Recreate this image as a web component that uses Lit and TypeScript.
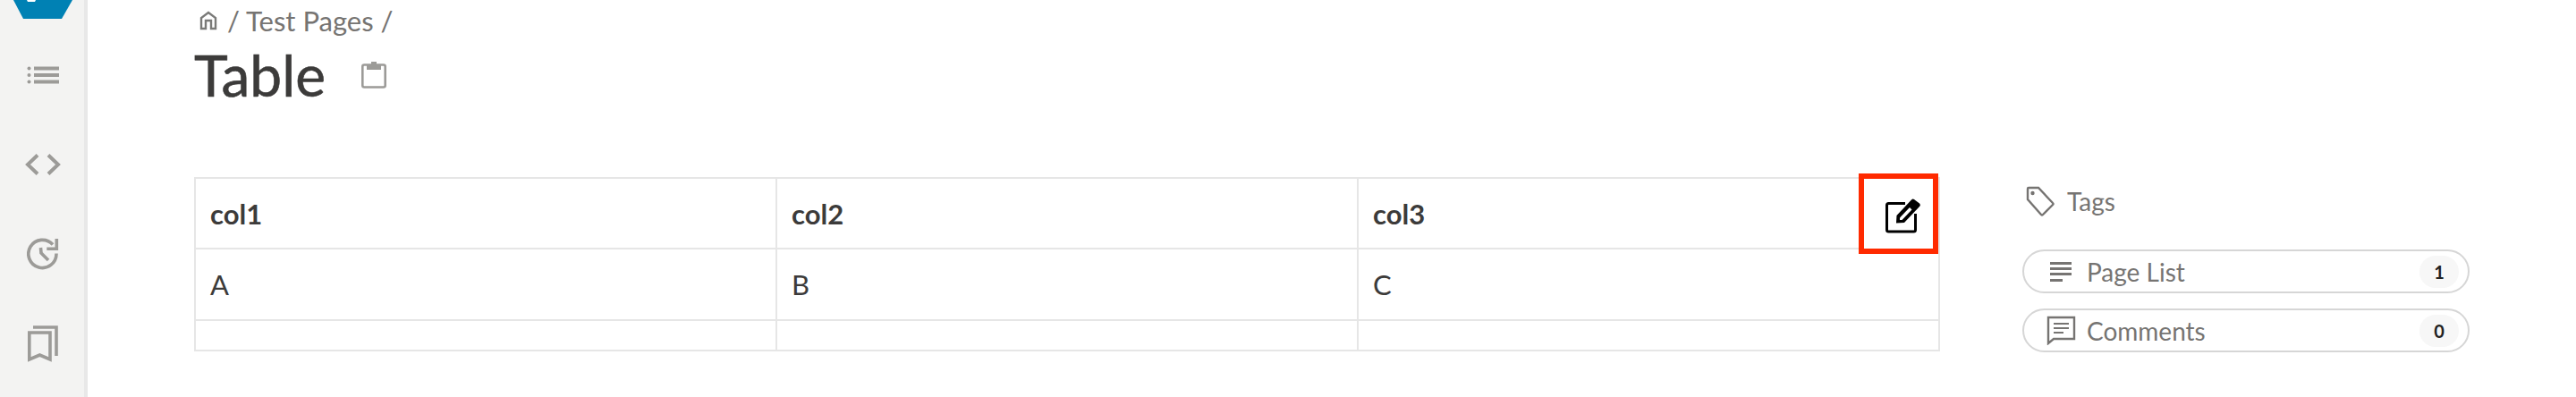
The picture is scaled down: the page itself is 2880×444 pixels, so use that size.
import { LitElement, html, css } from "lit";
import { customElement } from "lit/decorators.js";

@customElement("app-root")
export class AppRoot extends LitElement {
  static styles = css`
    :host { display: flex; width: 2880px; height: 444px; overflow: hidden; background: #fff; font-family: Lato, "Liberation Sans", sans-serif; color: #3c3b3a; }
    .side { width: 94px; flex: none; background: #f3f3f2; border-right: 4px solid #e8e8e8; display: flex; flex-direction: column; align-items: center; }
    .logo { display: block; height: 21px; width: 66px; margin: 0 0 13px 2px; flex: none; }
    .nav { height: 100px; flex: none; display: flex; align-items: center; justify-content: center; margin-left: 2px; }
    .nav svg { display: block; }
    .main { width: 1952px; margin-left: 119px; flex: none; }
    .crumb { height: 46px; display: flex; align-items: center; gap: 11px; font-size: 31px; color: #767472; white-space: nowrap; }
    .crumb svg { margin-left: 6px; }
    .title { display: flex; align-items: center; height: 70px; margin-top: 3px; font-size: 64px; line-height: 70px; color: #3c3b3a; -webkit-text-stroke: 0.6px #3c3b3a; }
    .title svg { margin-left: 40px; }
    .tablewrap { position: relative; margin-top: 79px; }
    table { border-collapse: collapse; width: 100%; table-layout: fixed; font-size: 31px; }
    td, th { border: 2px solid #e6e6e6; padding: 0 16px; text-align: left; height: 78px; }
    th { font-weight: 700; height: 77px; }
    tr.empty td { height: 32px; }
    .edit { position: absolute; right: 2px; top: -4px; width: 89px; height: 90px; box-sizing: border-box; border: 6px solid #ff2a00; padding: 4px 0 0 10px; display: flex; align-items: center; justify-content: center; background: #fff; }
    .aside { margin-left: 92px; width: 500px; flex: none; padding-top: 208px; }
    .tags { display: flex; align-items: center; gap: 14px; height: 34px; font-size: 28px; color: #767472; padding-left: 4px; margin-bottom: 37px; }
    .pill { height: 49px; box-sizing: border-box; border: 2px solid #d6d6d6; border-radius: 25px; display: flex; align-items: center; font-size: 28px; color: #767472; margin-bottom: 17px; padding-right: 10px; background: #fff; }
    .pill .ico { width: 58px; margin-left: 12px; display: flex; justify-content: center; flex: none; }
    .pill .lbl { flex: 1; }
    .count { width: 44px; height: 36px; border-radius: 18px; background: #f7f7f7; color: #222; font-size: 20px; font-weight: 700; display: flex; align-items: center; justify-content: center; }
  `;

  render() {
    const g = "#9c9b98";
    return html`
      <nav class="side">
        <svg class="logo" viewBox="0 0 66 21"><path d="M0 0 H66 L54 21 H11 Z" fill="#0081b4"/><path d="M15 0 H25 L24 2 H16 Z" fill="#fff"/></svg>
        <div class="nav"><svg width="36" height="20" viewBox="0 0 36 20" fill="${g}"><circle cx="2.5" cy="2.5" r="2"/><circle cx="2.5" cy="10" r="2"/><circle cx="2.5" cy="17.5" r="2"/><rect x="8" y="0.5" width="28" height="4"/><rect x="8" y="8" width="28" height="4"/><rect x="8" y="15.5" width="28" height="4"/></svg></div>
        <div class="nav"><svg width="40" height="24" viewBox="0 0 40 24" fill="none" stroke="${g}" stroke-width="4"><path d="M14 1.5 L3 12 L14 22.5"/><path d="M26 1.5 L37 12 L26 22.5"/></svg></div>
        <div class="nav"><svg width="36" height="36" viewBox="0 0 36 36" fill="none" stroke="${g}" stroke-width="3.6"><path d="M33 17.5 A15.6 15.6 0 1 1 29 7.5"/><path d="M15.5 11 L16 17 L24 25"/><path d="M33.3 1 V12.3 H22.3"/></svg></div>
        <div class="nav"><svg width="36" height="42" viewBox="0 0 36 42" fill="none" stroke="${g}" stroke-width="3.6"><path d="M2.8 9 H26 V39 L14.4 34 L2.8 39 Z"/><path d="M7 3 H33 V35"/></svg></div>
      </nav>
      <main class="main">
        <div class="crumb"><svg width="20" height="22" viewBox="0 0 20 22" fill="none" stroke="#7a7a78" stroke-width="2.4"><path d="M2 20 V8 L10 2 L18 8 V20 H13 V11 H7 V20 Z"/></svg><span>/ Test Pages /</span></div>
        <div class="title"><span>Table</span><svg width="28" height="30" viewBox="0 0 28 30" fill="none" stroke="#9c9b98" stroke-width="2.6"><rect x="1.3" y="3.5" width="25.4" height="25" rx="2"/><rect x="6" y="3" width="16" height="6" fill="#9c9b98" stroke="none"/><rect x="11" y="0" width="6" height="4" fill="#9c9b98" stroke="none"/></svg></div>
        <div class="tablewrap">
          <table>
            <tr><th>col1</th><th>col2</th><th>col3</th></tr>
            <tr><td>A</td><td>B</td><td>C</td></tr>
            <tr class="empty"><td></td><td></td><td></td></tr>
          </table>
          <div class="edit"><svg width="39" height="39" viewBox="0 0 39 39" fill="none"><path d="M22 5.5 H3.5 Q1.5 5.5 1.5 7.5 V35 Q1.5 37 3.5 37 H31.5 Q33.5 37 33.5 35 V17" stroke="#000" stroke-width="3"/><path d="M32 1 L38 5.5 Q39.5 7 38 9 L21 27 L12 27.5 L12.5 19 L29 1.5 Q30.5 0 32 1 Z" fill="#000"/><path d="M27 10 L16 21.5 L16 24 L18.5 24 L29.5 12.5 Z" fill="#fff"/></svg></div>
        </div>
      </main>
      <aside class="aside">
        <div class="tags"><svg width="32" height="34" viewBox="0 0 32 34" fill="none" stroke="#767472" stroke-width="2.4"><path d="M2 3 Q2 2 3 2 H14 L30 19 Q31 20 30 21 L19 32 Q18 33 17 32 L2 15 Z"/><circle cx="7.5" cy="8" r="1" fill="#767472"/></svg><span>Tags</span></div>
        <div class="pill"><span class="ico"><svg width="24" height="22" viewBox="0 0 24 22" fill="#767472"><rect y="0" width="24" height="3"/><rect y="6" width="24" height="3"/><rect y="12" width="24" height="3"/><rect y="19" width="14" height="3"/></svg></span><span class="lbl">Page List</span><span class="count">1</span></div>
        <div class="pill"><span class="ico"><svg width="33" height="33" viewBox="0 0 33 33" fill="none" stroke="#767472" stroke-width="2.4"><path d="M2 2 H31 V26 H8 L2 31 Z"/><path d="M8 9 H25 M8 14 H25 M8 19 H19" stroke-width="2"/></svg></span><span class="lbl">Comments</span><span class="count">0</span></div>
      </aside>
    `;
  }
}
